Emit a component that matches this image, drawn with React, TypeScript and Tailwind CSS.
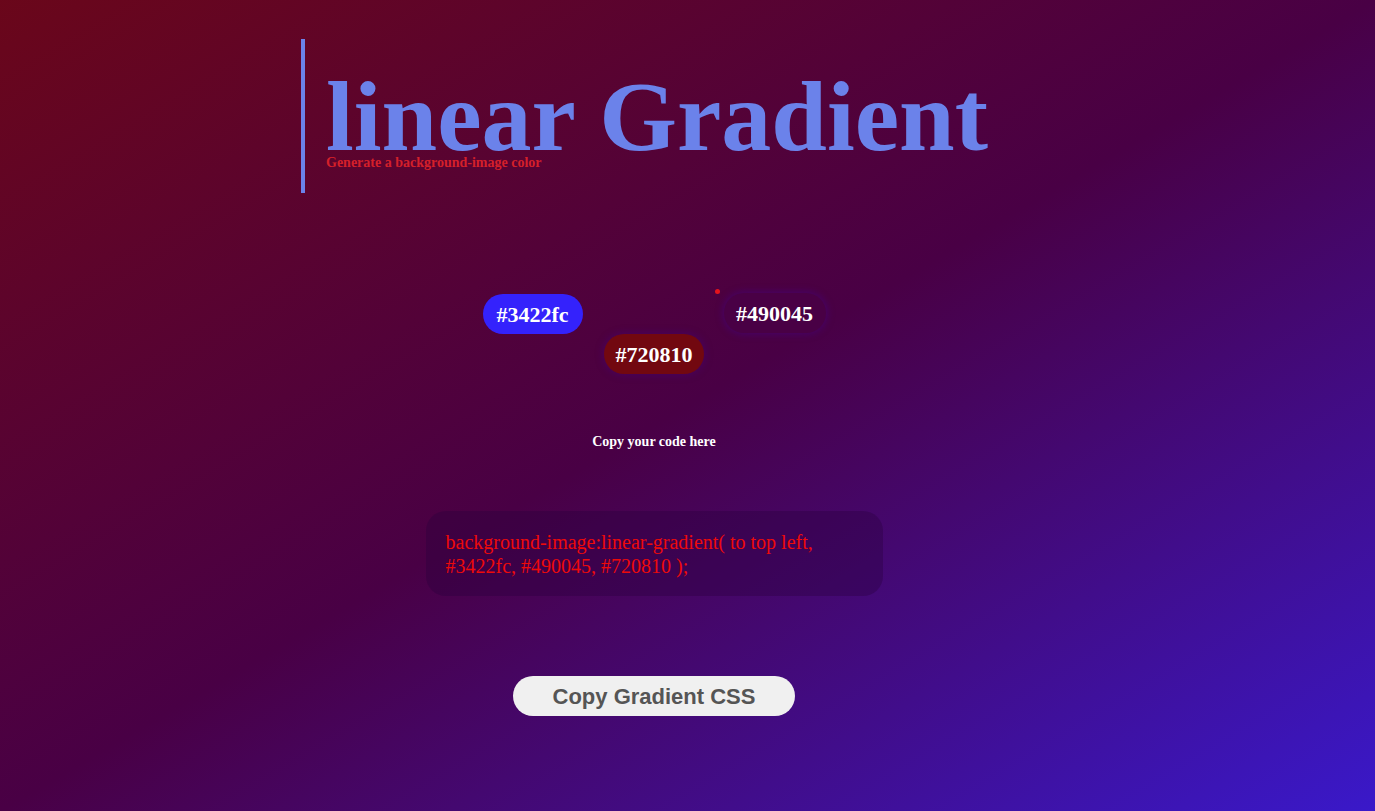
export default function App() {
  return (
    <main className="min-h-screen w-full bg-[linear-gradient(to_top_left,#3422fc_-19%,#490045_50%,#720810_112%)] font-['Liberation_Serif',serif] text-white">
      <div className="w-[1308px] flex flex-col">
        {/* Title */}
        <header className="ml-[301px] mt-[39px] self-start border-l-4 border-[#6b82ea] pl-[21px] pt-[40px] pb-[22px]">
          <h1 className="text-[100px] leading-[76px] font-bold text-[#6b82ea]">linear Gradient</h1>
          <p className="text-[14px] leading-[16px] font-bold text-[#d4202a]">Generate a background-image color</p>
        </header>

        {/* Colour pickers */}
        <section className="mt-[100px] flex flex-col items-center">
          <div className="flex w-[343px] justify-between items-start">
            <span className="mt-px w-[100px] h-[40px] rounded-full bg-[#3422fc] flex items-center justify-center text-[22px] font-bold">#3422fc</span>
            <div className="flex items-start">
              <span className="mt-[-4px] mr-[4px] w-[5px] h-[5px] rounded-full bg-[#e3141c]"></span>
              <span className="w-[102px] h-[40px] rounded-full bg-[#490045] shadow-[0_0_6px_2px_rgba(70,0,110,0.7)] flex items-center justify-center text-[22px] font-bold">#490045</span>
            </div>
          </div>
          <span className="w-[100px] h-[40px] rounded-full bg-[#720810] shadow-[0_0_6px_2px_rgba(70,0,110,0.5)] flex items-center justify-center text-[22px] font-bold">#720810</span>
        </section>

        {/* Code output */}
        <section className="mt-[60px] flex flex-col items-center">
          <p className="text-[14px] leading-[16px] font-bold">Copy your code here</p>
          <div className="mt-[61px] w-[457px] rounded-[20px] bg-[rgba(40,0,60,0.35)] pl-[20px] pr-[20px] pt-[19px] pb-[18px] text-[20px] leading-[24px] text-[#ee0a0a]">
            background-image:linear-gradient( to top left, #3422fc, #490045, #720810 );
          </div>
          <button className="mt-[80px] w-[282px] h-[40px] rounded-full bg-[#f0f0f0] font-['Liberation_Sans',sans-serif] text-[22px] font-bold text-[#555555]">
            Copy Gradient CSS
          </button>
        </section>
      </div>
    </main>
  );
}
